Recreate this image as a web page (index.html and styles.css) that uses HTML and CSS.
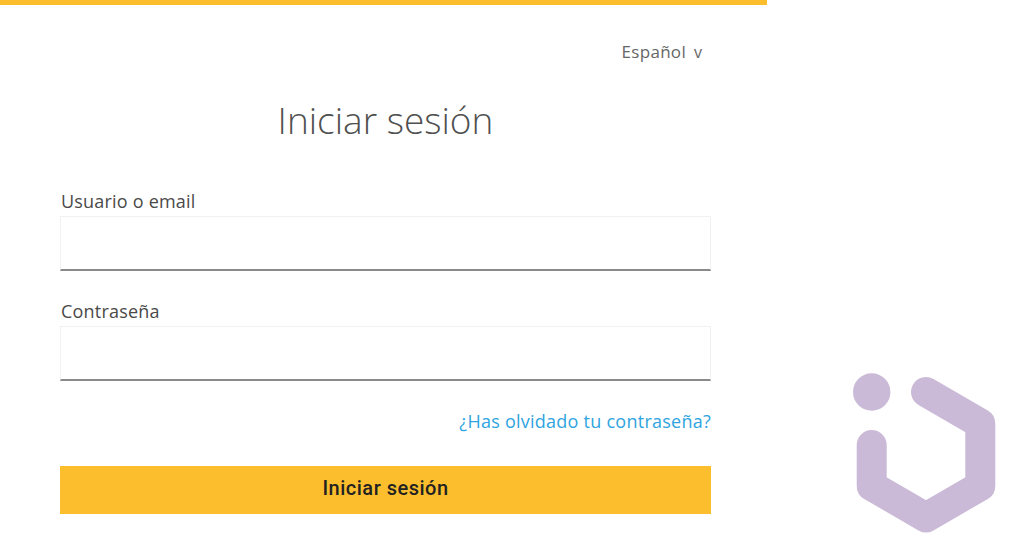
FILE: index.html
```html
<!DOCTYPE html>
<html lang="es">
<head>
  <meta charset="UTF-8">
  <title>Iniciar sesión</title>
  <link rel="stylesheet" href="styles.css">
</head>
<body>
  <div class="page">
    <!-- Panel del formulario -->
    <div class="panel">
      <div class="lang"><span>Español</span><span class="lang-arrow">v</span></div>
      <h1>Iniciar sesión</h1>
      <form class="login">
        <label for="usuario">Usuario o email</label>
        <input type="text" id="usuario">
        <label for="clave" class="second">Contraseña</label>
        <input type="password" id="clave">
        <a href="#" class="forgot">¿Has olvidado tu contraseña?</a>
        <button type="button">Iniciar sesión</button>
      </form>
    </div>

    <!-- Logo -->
    <div class="brand">
      <svg class="logo" width="263" height="546" viewBox="767 0 263 546" aria-hidden="true">
        <circle cx="871.7" cy="392" r="18.7" fill="#cabad7"/>
        <path d="M926 392 L980.3 423.4 V486 L926 517.4 L871.7 486 V445" fill="none" stroke="#cabad7" stroke-width="30" stroke-linecap="round" stroke-linejoin="round"/>
      </svg>
    </div>
  </div>
</body>
</html>
```

FILE: styles.css
```css
body {
  margin: 0;
  background: #fff;
  font-family: 'Open Sans', sans-serif;
  color: #4a4a4a;
}

.page {
  display: flex;
  height: 546px;
  overflow: hidden;
}

.panel {
  width: 767px;
  box-sizing: border-box;
  border-top: 5px solid #fcbe2d;
  padding: 0 56px 0 60px;
}

.lang {
  display: flex;
  justify-content: flex-end;
  gap: 8px;
  margin-top: 36px;
  padding-right: 9px;
  font-size: 17px;
  line-height: 22px;
  letter-spacing: 0.3px;
  color: #666;
}

.lang-arrow {
  font-size: 16px;
  letter-spacing: 0;
}

h1 {
  margin: 32px 0 0;
  font-size: 37px;
  font-weight: 300;
  line-height: 50px;
  text-align: center;
  color: #505050;
}

.login {
  display: flex;
  flex-direction: column;
  margin-top: 45px;
}

label {
  padding-left: 1px;
  font-size: 18px;
  line-height: 22px;
  letter-spacing: 0.2px;
  color: #4a4a4a;
}

label.second {
  margin-top: 29px;
}

input {
  height: 55px;
  box-sizing: border-box;
  margin-top: 4px;
  border: 1px solid #f1f1f1;
  border-bottom: 2px solid #8a8a8a;
  background: #fff;
  outline: none;
}

.forgot {
  align-self: flex-end;
  margin-top: 29px;
  font-size: 18px;
  line-height: 22px;
  letter-spacing: 0.25px;
  color: #2fa4e0;
  text-decoration: none;
}

button {
  height: 48px;
  margin-top: 34px;
  padding: 0 0 4px;
  border: none;
  background: #fcbe2d;
  color: #222;
  font-family: 'Roboto', sans-serif;
  font-size: 20px;
  font-weight: 500;
  letter-spacing: 0.5px;
  cursor: pointer;
}

.brand {
  flex: 1;
}

.logo {
  display: block;
}
```
